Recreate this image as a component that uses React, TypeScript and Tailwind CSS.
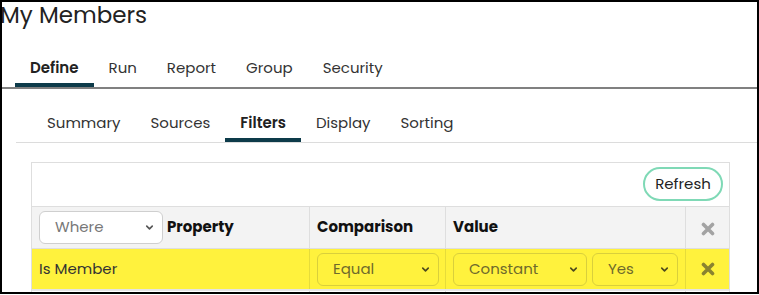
import { ChevronDown } from "lucide-react";

const topTabs = ["Define", "Run", "Report", "Group", "Security"];
const subTabs = ["Summary", "Sources", "Filters", "Display", "Sorting"];

type SelectProps = {
  value: string;
  width: string;
  tone?: "white" | "yellow";
};

const RemoveIcon = ({ color }: { color: string }) => (
  <svg width="14" height="14" viewBox="0 0 14 14" className={color}>
    <path d="M2.5 2.5 L11.5 11.5 M11.5 2.5 L2.5 11.5" stroke="currentColor" strokeWidth="3.6" strokeLinecap="round" />
  </svg>
);

const FakeSelect = ({ value, width, tone = "yellow" }: SelectProps) => (
  <div
    className={`relative flex items-center h-[33px] rounded-md border pl-[15px] ${width} ${
      tone === "white"
        ? "bg-white border-[#cfcfcf] text-[#777]"
        : "bg-transparent border-[#d9cf3c] text-[#6f6a2c]"
    }`}
  >
    <span className="text-[15px]">{value}</span>
    <ChevronDown
      size={11}
      strokeWidth={3.5}
      className={`absolute right-[7px] top-[10px] ${tone === "white" ? "text-[#555]" : "text-[#4d4a1e]"}`}
    />
  </div>
);

export default function App() {
  return (
    <div className="w-[759px] h-[294px] bg-white border-2 border-black overflow-hidden font-['Poppins','Inter',sans-serif] text-[#222]">
      {/* Title */}
      <h1 className="text-[23px] leading-[28px] text-[#222] -ml-[2px] -mt-[1px]">My Members</h1>

      {/* Main tabs */}
      <div className="mt-[29px] border-b-2 border-[#808080]">
        <ul className="flex pl-[13px]">
          {topTabs.map((tab, i) => (
            <li
              key={tab}
              className={`px-[15px] pb-[5px] text-[15px] leading-[20px] border-b-4 ${
                i === 0 ? "font-semibold border-[#0d3b4a] text-[#222]" : "border-transparent text-[#333]"
              }`}
            >
              {tab}
            </li>
          ))}
        </ul>
      </div>

      {/* Sub tabs */}
      <div className="ml-[14px] mt-[24px] border-b border-[#dcdcdc]">
        <ul className="flex pl-[16px]">
          {subTabs.map((tab, i) => (
            <li
              key={tab}
              className={`px-[15px] pb-[5px] text-[15px] leading-[20px] border-b-4 ${
                i === 2 ? "font-semibold border-[#0d3b4a] text-[#222]" : "border-transparent text-[#333]"
              }`}
            >
              {tab}
            </li>
          ))}
        </ul>
      </div>

      {/* Filters table */}
      <div className="ml-[29px] mt-[19px] w-[699px] border border-[#dedede]">
        <div className="flex justify-end h-[44px] pt-[4px] pr-[6px] border-b border-[#dedede]">
          <button className="h-[34px] w-[80px] rounded-full border-2 border-[#7fd9b6] text-[15px] text-[#222]">
            Refresh
          </button>
        </div>

        <div className="grid grid-cols-[278px_136px_240px_1fr] bg-[#f3f3f3] h-[42px] border-b border-[#dedede]">
          <div className="flex items-center gap-[4px] pl-[7px] border-r border-[#dedede]">
            <FakeSelect value="Where" width="w-[124px]" tone="white" />
            <span className="text-[15px] font-bold text-[#111]">Property</span>
          </div>
          <div className="flex items-center pl-[7px] border-r border-[#dedede] text-[15px] font-bold text-[#111]">
            Comparison
          </div>
          <div className="flex items-center pl-[7px] border-r border-[#dedede] text-[15px] font-bold text-[#111]">
            Value
          </div>
          <div className="flex items-center justify-center pt-[2px]">
            <RemoveIcon color="text-[#a3a3a3]" />
          </div>
        </div>

        <div className="grid grid-cols-[278px_136px_240px_1fr] bg-[#fff23d] h-[40px]">
          <div className="flex items-center pl-[7px] border-r border-[#e6dc3a] text-[15px] text-[#333]">
            Is Member
          </div>
          <div className="flex items-center pl-[7px] border-r border-[#e6dc3a]">
            <FakeSelect value="Equal" width="w-[122px]" />
          </div>
          <div className="flex items-center gap-[5px] pl-[7px] border-r border-[#e6dc3a]">
            <FakeSelect value="Constant" width="w-[134px]" />
            <FakeSelect value="Yes" width="w-[86px]" />
          </div>
          <div className="flex items-center justify-center">
            <RemoveIcon color="text-[#8a8230]" />
          </div>
        </div>

        <div className="grid grid-cols-[278px_136px_240px_1fr] h-[40px] border-t-2 border-[#e4e4e4]">
          <div className="border-r border-[#dedede]" />
          <div className="border-r border-[#dedede]" />
          <div className="border-r border-[#dedede]" />
          <div />
        </div>
      </div>
    </div>
  );
}
